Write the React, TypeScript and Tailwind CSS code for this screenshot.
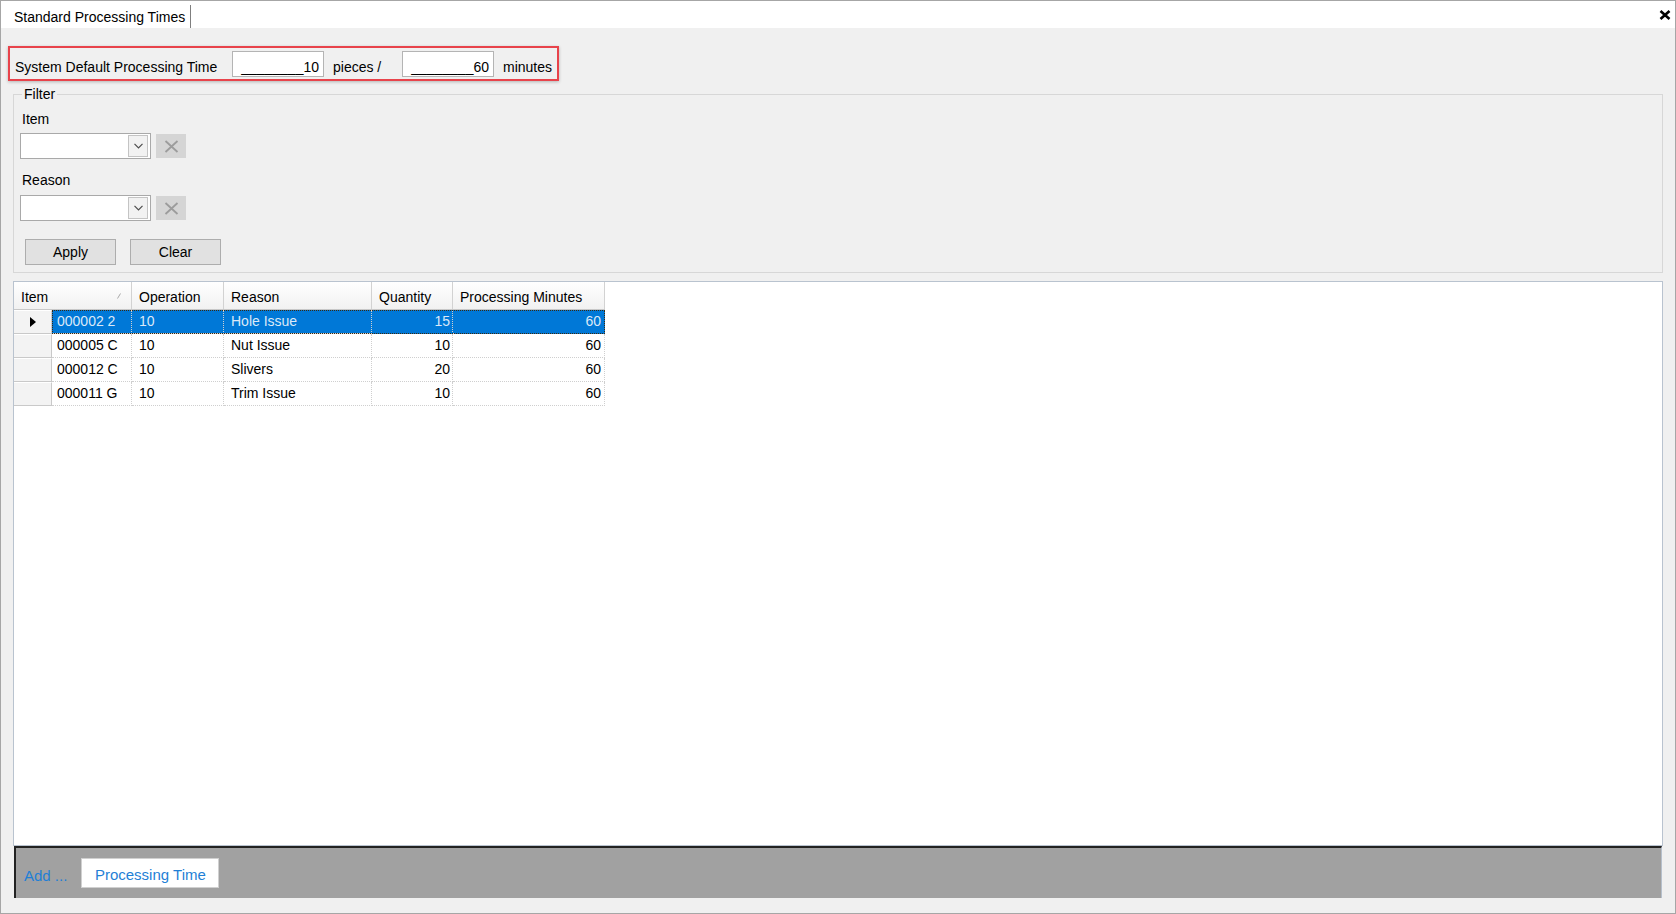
import React from "react";

type Row = {
  item: string;
  op: string;
  reason: string;
  qty: number;
  minutes: number;
};

const rows: Row[] = [
  { item: "000002 2", op: "10", reason: "Hole Issue", qty: 15, minutes: 60 },
  { item: "000005 C", op: "10", reason: "Nut Issue", qty: 10, minutes: 60 },
  { item: "000012 C", op: "10", reason: "Slivers", qty: 20, minutes: 60 },
  { item: "000011 G", op: "10", reason: "Trim Issue", qty: 10, minutes: 60 },
];

function CloseGlyph() {
  return (
    <svg width="12" height="10" viewBox="0 0 12 10">
      <path d="M1.5 1 L10.5 9 M10.5 1 L1.5 9" stroke="#000" strokeWidth="2.6" />
    </svg>
  );
}

function MaskedInput({ value }: { value: string }) {
  return (
    <div className="flex h-[26px] w-[92px] items-start justify-end border border-[#b4b4b4] bg-white pr-[4px] pt-[7px]">
      <span className="whitespace-pre">________{value}</span>
    </div>
  );
}

function ComboRow() {
  return (
    <div className="flex items-center">
      <div className="flex h-[26px] w-[131px] items-center justify-end border border-[#a9a9a9] bg-white pr-[2px]">
        <div className="flex h-[22px] w-[20px] items-center justify-center border border-[#c4c4c4] bg-[#f2f2f2]">
          <svg width="9" height="6" viewBox="0 0 9 6">
            <path d="M0.5 0.8 L4.5 4.8 L8.5 0.8" fill="none" stroke="#4d4d4d" strokeWidth="1.2" />
          </svg>
        </div>
      </div>
      <div className="ml-[5px] flex h-[24px] w-[30px] items-center justify-center bg-[#d5d5d5]">
        <svg width="15" height="13" viewBox="0 0 15 13">
          <path d="M1.5 1 L13.5 12 M13.5 1 L1.5 12" stroke="#9c9c9c" strokeWidth="1.8" />
        </svg>
      </div>
    </div>
  );
}

function FormButton({ label }: { label: string }) {
  return (
    <div className="flex h-[26px] w-[91px] items-center justify-center border border-[#adadad] bg-[#e1e1e1]">
      {label}
    </div>
  );
}

function HeaderCell({
  label,
  width,
  children,
}: {
  label: string;
  width: string;
  children?: React.ReactNode;
}) {
  return (
    <div
      className={`relative flex h-full items-center border-r border-[#d2d2d2] bg-gradient-to-b from-white to-[#f1f1f1] pl-[7px] pt-[2px] ${width}`}
    >
      {label}
      {children}
    </div>
  );
}

function DataGrid() {
  return (
    <div className="mx-[12px] flex min-h-0 flex-1 flex-col border border-[#b9c3cf] bg-white">
      <div className="flex h-[28px] shrink-0">
        <div className="flex h-full border-b border-[#c8c8c8]">
          <HeaderCell label="Item" width="w-[118px]">
            <svg className="absolute right-[10px] top-[11px]" width="4" height="6" viewBox="0 0 4 6">
              <path d="M0.5 5.5 L3.5 0.5" stroke="#a8a8a8" strokeWidth="1" />
            </svg>
          </HeaderCell>
          <HeaderCell label="Operation" width="w-[92px]" />
          <HeaderCell label="Reason" width="w-[148px]" />
          <HeaderCell label="Quantity" width="w-[81px]" />
          <HeaderCell label="Processing Minutes" width="w-[152px]" />
        </div>
      </div>
      {rows.map((r, i) => {
        const selected = i === 0;
        return (
          <div key={r.item} className="flex h-[24px] shrink-0">
            <div className="flex w-[38px] items-center justify-center border-r border-b border-[#c9c9c9] bg-[#f3f3f3] border-t border-t-white">
              {selected ? (
                <svg width="6" height="10" viewBox="0 0 6 10">
                  <path d="M0 0 L6 5 L0 10 Z" fill="#000" />
                </svg>
              ) : null}
            </div>
            <div
              className={`flex ${
                selected
                  ? "bg-[#0078d7] text-[#dbe9f8] outline outline-1 outline-dotted outline-offset-[-1px] outline-[#3a2a10]"
                  : "text-black"
              }`}
            >
              <div className="flex w-[80px] items-center border-r border-b border-dotted border-[#cfcfcf] pb-[2px] pl-[5px]">
                {r.item}
              </div>
              <div className="flex w-[92px] items-center border-r border-b border-dotted border-[#cfcfcf] pb-[2px] pl-[7px]">
                {r.op}
              </div>
              <div className="flex w-[148px] items-center border-r border-b border-dotted border-[#cfcfcf] pb-[2px] pl-[7px]">
                {r.reason}
              </div>
              <div className="flex w-[81px] items-center justify-end border-r border-b border-dotted border-[#cfcfcf] pb-[2px] pr-[2px]">
                {r.qty}
              </div>
              <div className="flex w-[152px] items-center justify-end border-r border-b border-dotted border-[#cfcfcf] pb-[2px] pr-[3px]">
                {r.minutes}
              </div>
            </div>
          </div>
        );
      })}
    </div>
  );
}

export default function App() {
  return (
    <div className="flex h-[914px] w-[1676px] flex-col border border-[#a6a6a6] bg-[#f0f0f0] font-['Liberation_Sans',Arial,sans-serif] text-[14px] leading-[16px] text-black">
      {/* tab strip */}
      <div className="flex h-[27px] shrink-0 items-stretch bg-white">
        <div className="mt-[4px] flex items-center border-r border-[#7f7f7f] pl-[13px] pr-[5px]">
          Standard Processing Times
        </div>
        <div className="ml-auto mr-[4px] mt-[9px] self-start">
          <CloseGlyph />
        </div>
      </div>

      {/* system default */}
      <div className="ml-[7px] mt-[18px] flex h-[35px] w-[551px] shrink-0 items-start border-2 border-[#e8434b] pl-[5px] pt-[3px] shadow-[0_1px_3px_rgba(0,0,0,0.25)]">
        <span className="mt-[8px] w-[217px]">System Default Processing Time</span>
        <MaskedInput value="10" />
        <span className="ml-[9px] mt-[8px] w-[69px]">pieces /</span>
        <MaskedInput value="60" />
        <span className="ml-[9px] mt-[8px]">minutes</span>
      </div>

      {/* filter */}
      <fieldset className="mx-[12px] mt-[5px] shrink-0 border border-[#d7d7d7] pb-[7px] pl-[6px]">
        <legend className="ml-[2px] px-[2px] leading-[16px]">Filter</legend>
        <div className="mt-[9px] ml-[2px]">Item</div>
        <div className="mt-[6px]">
          <ComboRow />
        </div>
        <div className="mt-[13px] ml-[2px]">Reason</div>
        <div className="mt-[7px]">
          <ComboRow />
        </div>
        <div className="mt-[18px] ml-[5px] flex gap-[14px]">
          <FormButton label="Apply" />
          <FormButton label="Clear" />
        </div>
      </fieldset>

      <div className="mt-[8px] flex min-h-0 flex-1 flex-col">
        <DataGrid />
      </div>

      {/* bottom bar */}
      <div className="mx-[13px] mb-[15px] flex h-[52px] shrink-0 items-center border-t-2 border-l-2 border-[#222] border-r border-r-[#b6c0cc] bg-[#a1a1a1] text-[15px] text-[#1f7fd6]">
        <span className="ml-[8px] mt-[5px]">Add ...</span>
        <div className="ml-[14px] flex h-[30px] w-[138px] items-center justify-center border border-[#d0d0d0] bg-white pt-[3px]">
          Processing Time
        </div>
      </div>
    </div>
  );
}
